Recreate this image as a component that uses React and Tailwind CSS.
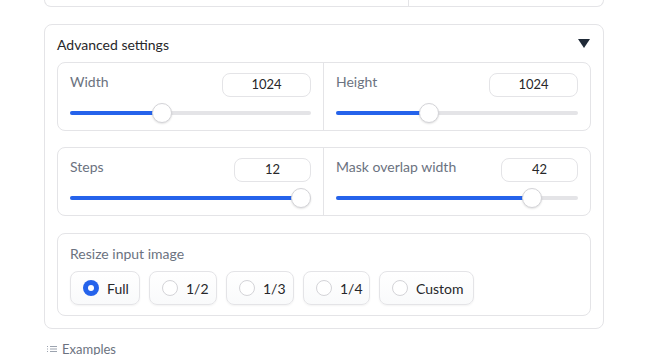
import React from 'react';

const font = { fontFamily: 'Lato, "Noto Sans", sans-serif' };

const Slider = ({ pos }) => {
  // pos: 0..1 position of the thumb along the track
  const left = `calc(10px + (100% - 20px) * ${pos})`;
  return (
    <div className="relative h-5 mt-[6px]">
      <div className="absolute left-0 right-0 top-[8px] h-[4px] rounded-full bg-[#e4e4e7]" />
      <div
        className="absolute left-0 top-[8px] h-[4px] rounded-full bg-[#2563eb]"
        style={{ width: left }}
      />
      <div
        className="absolute top-0 w-5 h-5 -ml-[10px] rounded-full bg-white border border-[#d4d4d8] shadow-[0_1px_2px_rgba(0,0,0,0.12)]"
        style={{ left }}
      />
    </div>
  );
};

const SliderField = ({ label, value, inputWidth, pos, divider }) => (
  <div className={`px-3 pt-[10px] pb-[7px] ${divider ? 'border-r border-[#e4e4e7]' : ''}`}>
    <div className="flex items-start justify-between h-6">
      <span className="text-[14px] leading-5 text-[#6b7280] mt-[-1px]">{label}</span>
      <div
        className={`${inputWidth} h-6 rounded-lg border border-[#e4e4e7] flex items-center justify-center text-[13px] text-[#27272a]`}
      >
        {value}
      </div>
    </div>
    <Slider pos={pos} />
  </div>
);

const Radio = ({ label, checked, width }) => (
  <div
    className={`${width} h-[34px] flex items-center gap-2 pl-3 rounded-lg border border-[#e4e4e7] bg-gradient-to-b from-white to-[#f9fafb] shadow-[0_1px_2px_rgba(0,0,0,0.05)]`}
  >
    {checked ? (
      <span className="w-4 h-4 shrink-0 rounded-full bg-[#2563eb] flex items-center justify-center">
        <span className="w-[6px] h-[6px] rounded-full bg-white" />
      </span>
    ) : (
      <span className="w-4 h-4 shrink-0 rounded-full bg-white border border-[#d4d4d8]" />
    )}
    <span className="text-[14px] text-[#27272a] whitespace-nowrap">{label}</span>
  </div>
);

export default function App() {
  return (
    <div className="w-[649px] h-[355px] overflow-hidden bg-white pl-[44px] pr-[45px]" style={font}>
      {/* Previous block, cut off */}
      <div className="h-[7px] flex border-x border-b border-[#e4e4e7] rounded-b-lg">
        <div className="w-[364px] border-r border-[#e4e4e7]" />
      </div>

      {/* Advanced settings */}
      <div className="mt-[17px] rounded-lg border border-[#e4e4e7] px-3 pb-3 pt-[9px]">
        <div className="h-5 mb-2 flex items-center justify-between">
          <span className="text-[14px] text-[#27272a]">Advanced settings</span>
          <svg width="12" height="9" viewBox="0 0 12 9" className="mr-[1px] mt-[-1px]">
            <polygon points="0,0 12,0 6,9" fill="#1f2937" />
          </svg>
        </div>

        <div className="flex flex-col gap-4">
          <div className="grid grid-cols-2 rounded-lg border border-[#e4e4e7]">
            <SliderField label="Width" value="1024" inputWidth="w-[89px]" pos={0.37} divider />
            <SliderField label="Height" value="1024" inputWidth="w-[89px]" pos={0.375} />
          </div>

          <div className="grid grid-cols-2 rounded-lg border border-[#e4e4e7]">
            <SliderField label="Steps" value="12" inputWidth="w-[77px]" pos={1} divider />
            <SliderField label="Mask overlap width" value="42" inputWidth="w-[77px]" pos={0.837} />
          </div>

          <div className="mt-px rounded-lg border border-[#e4e4e7] px-3 pt-[10px] pb-[10px]">
            <div className="text-[14px] leading-5 text-[#6b7280]">Resize input image</div>
            <div className="mt-[7px] flex gap-[9px]">
              <Radio label="Full" width="w-[70px]" checked />
              <Radio label="1/2" width="w-[68px]" />
              <Radio label="1/3" width="w-[68px]" />
              <Radio label="1/4" width="w-[67px]" />
              <Radio label="Custom" width="w-[95px]" />
            </div>
          </div>
        </div>
      </div>

      {/* Examples */}
      <div className="mt-[10px] ml-[3px] flex items-center gap-[5px] text-[13px] leading-5 text-[#6b7280]">
        <svg width="10" height="8" viewBox="0 0 10 8" fill="none" stroke="#9ca3af" strokeWidth="1">
          <path d="M0 1.5h1M3 1.5h7M0 4h1M3 4h7M0 6.5h1M3 6.5h7" />
        </svg>
        <span>Examples</span>
      </div>
    </div>
  );
}
